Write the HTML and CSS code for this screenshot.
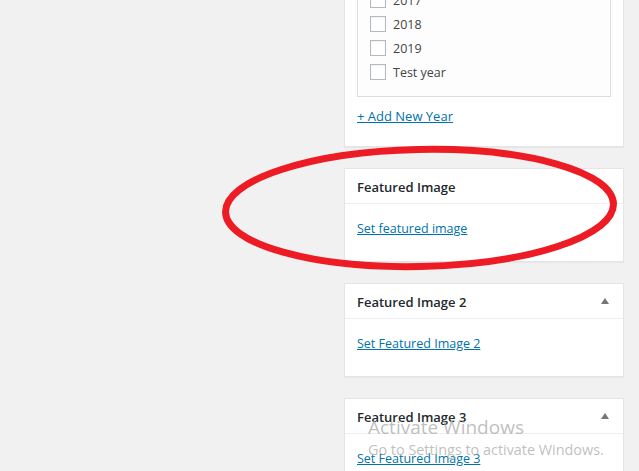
FILE: index.html
```html
<!DOCTYPE html>
<html>
<head>
<meta charset="utf-8">
<link rel="stylesheet" href="styles.css">
</head>
<body>
<div class="page">
  <div class="sidebar">
    <div class="postbox first">
      <div class="catbox">
        <label class="row"><span class="cb"></span>2016</label>
        <label class="row"><span class="cb"></span>2017</label>
        <label class="row"><span class="cb"></span>2018</label>
        <label class="row"><span class="cb"></span>2019</label>
        <label class="row"><span class="cb"></span>Test year</label>
      </div>
      <a class="link addnew" href="#">+ Add New Year</a>
    </div>

    <div class="postbox">
      <div class="hd"><h2>Featured Image</h2></div>
      <div class="inside"><a class="link" href="#">Set featured image</a></div>
    </div>

    <div class="postbox">
      <div class="hd"><h2>Featured Image 2</h2><span class="tri"></span></div>
      <div class="inside"><a class="link" href="#">Set Featured Image 2</a></div>
    </div>

    <div class="postbox">
      <div class="hd"><h2>Featured Image 3</h2><span class="tri"></span></div>
      <div class="inside"><a class="link" href="#">Set Featured Image 3</a></div>
    </div>
  </div>

  <svg class="circle" width="639" height="471" viewBox="0 0 639 471">
    <ellipse cx="419.5" cy="208" rx="194" ry="58.5" transform="rotate(-1.2 419.5 208)" fill="none" stroke="#ed1c24" stroke-width="7"/>
  </svg>

  <div class="watermark">
    <div class="wm1">Activate Windows</div>
    <div class="wm2">Go to Settings to activate Windows.</div>
  </div>
</div>
</body>
</html>
```

FILE: styles.css
```css
html, body {
  margin: 0;
  padding: 0;
  background: #f1f1f1;
  overflow: hidden;
}
body {
  font-family: "Open Sans", "Noto Sans", sans-serif;
  font-size: 13px;
  color: #444;
  width: 639px;
  height: 471px;
}
.page {
  position: relative;
  width: 639px;
  height: 471px;
  overflow: hidden;
}
.sidebar {
  margin-left: 344px;
  width: 280px;
  margin-top: -58px;
  display: flex;
  flex-direction: column;
  gap: 21px;
}
.postbox {
  background: #fff;
  border: 1px solid #e5e5e5;
  box-shadow: 0 1px 1px rgba(0,0,0,0.04);
}
.first {
  padding: 12px 12px 20px;
}
.catbox {
  border: 1px solid #dddddd;
  background: #fdfdfd;
  padding: 8px 12px 12px;
  display: flex;
  flex-direction: column;
}
.row {
  height: 24px;
  display: flex;
  align-items: center;
  gap: 7px;
  color: #444;
  font-size: 12.5px;
}
.cb {
  width: 14px;
  height: 14px;
  border: 1px solid #b4b9be;
  background: #fff;
  box-shadow: inset 0 1px 2px rgba(0,0,0,0.07);
}
.link {
  color: #0073aa;
  text-decoration: underline;
  line-height: 20px;
  font-size: 12.5px;
}
.addnew {
  display: block;
  margin-top: 9px;
  font-size: 13px;
}
.hd {
  height: 34px;
  border-bottom: 1px solid #eeeeee;
  display: flex;
  align-items: center;
  justify-content: space-between;
  padding: 0 14px 0 12px;
}
.hd h2 {
  margin: 0;
  padding-top: 2px;
  font-size: 13px;
  font-weight: 600;
  color: #23282d;
}
.tri {
  width: 0;
  height: 0;
  border-left: 4px solid transparent;
  border-right: 4px solid transparent;
  border-bottom: 6px solid #72777c;
}
.inside {
  padding: 15px 12px 22px;
  display: flex;
}
.circle {
  position: absolute;
  left: 0;
  top: 0;
  pointer-events: none;
}
.watermark {
  position: absolute;
  left: 368px;
  top: 414px;
  color: rgba(170,170,170,0.75);
  pointer-events: none;
}
.wm1 {
  font-size: 19px;
  line-height: 26px;
}
.wm2 {
  font-size: 14.4px;
  line-height: 20px;
}
```
